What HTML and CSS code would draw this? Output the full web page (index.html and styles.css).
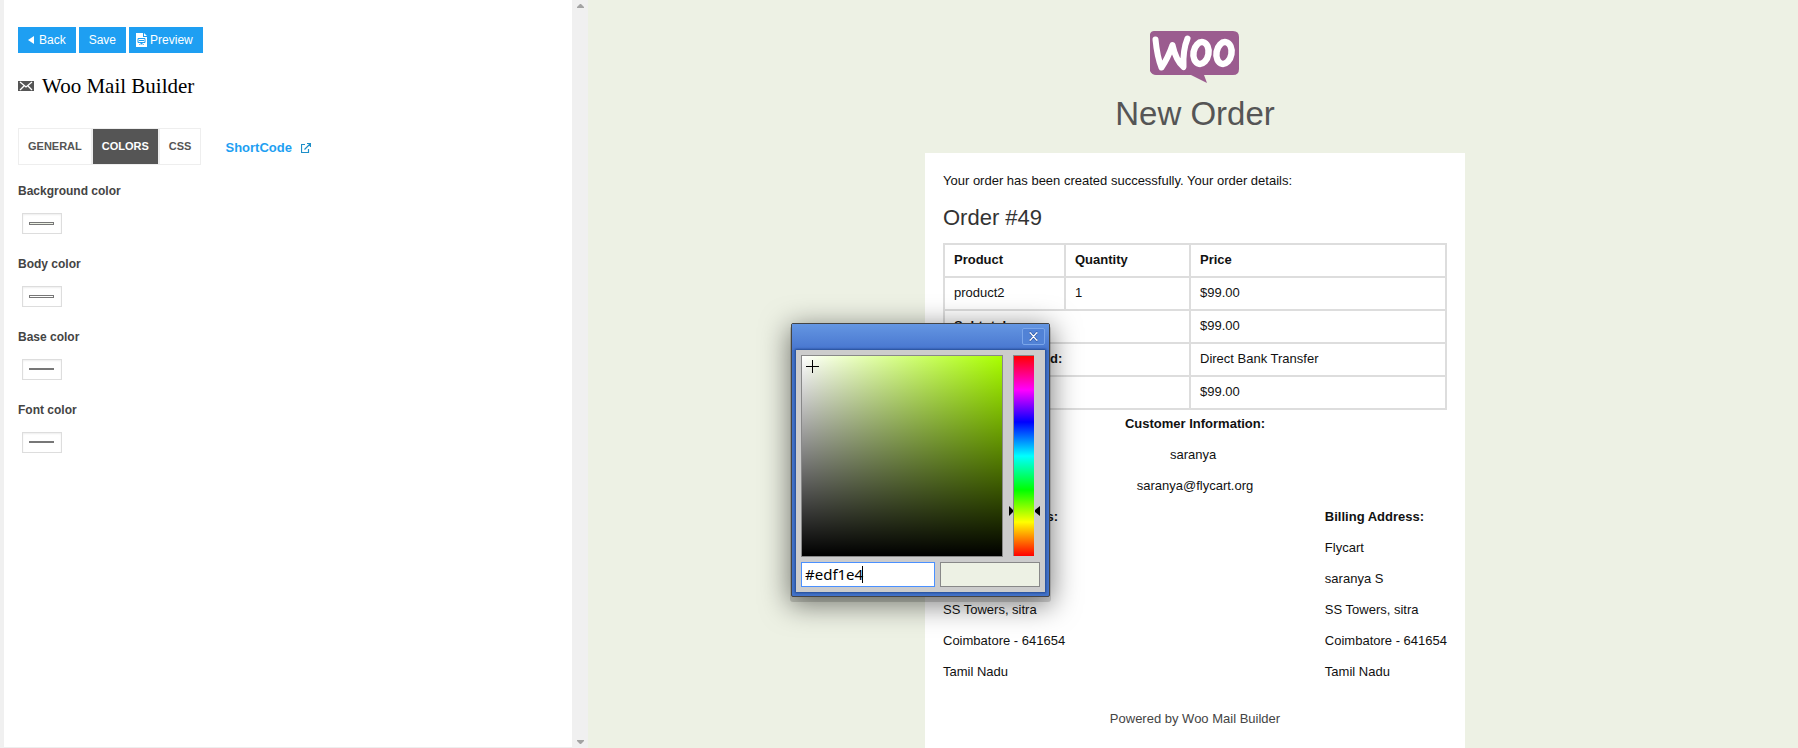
FILE: index.html
```html
<!DOCTYPE html>
<html lang="en">
<head>
<meta charset="utf-8">
<title>Woo Mail Builder</title>
<link rel="stylesheet" href="styles.css">
</head>
<body>
<div class="app">
  <aside class="panel">
    <div class="panel-body">
      <div class="toolbar">
        <button type="button" class="btn btn-back"><svg class="icon-back" viewBox="0 0 6 8"><path d="M6 0v8L0 4z"/></svg>Back</button>
        <button type="button" class="btn btn-save">Save</button>
        <button type="button" class="btn btn-preview"><svg class="icon-file" viewBox="0 0 11 14"><path fill="#fff" d="M0 0h7v4h4v10H0z"/><path fill="#fff" d="M8 0l3 3H8z"/><path fill="none" stroke="#1e9ff2" d="M2 5.500h7v4H2zM3 7.500h5M5.500 9.500v2M3.500 12l1-1.500M7.500 12l-1-1.500"/></svg>Preview</button>
      </div>
      <h1 class="title"><svg class="icon-mail" viewBox="0 0 16 10"><rect width="16" height="10" fill="#555"/><path d="M2 1l6 5 6-5M2 9l4-4M14 9l-4-4" fill="none" stroke="#fff" stroke-width="1.300"/></svg>Woo Mail Builder</h1>
      <nav class="nav">
        <div class="tabs">
          <button type="button" class="tab">GENERAL</button>
          <button type="button" class="tab tab-active">COLORS</button>
          <button type="button" class="tab">CSS</button>
        </div>
        <a href="#" class="shortcode">ShortCode<svg class="icon-ext" viewBox="0 0 10 10"><path d="M4 1.500H.5v8h7V6M3.500 6.500L9 1M6 .5h3.500V4" fill="none" stroke="#1e8fc8" stroke-width="1.200"/></svg></a>
      </nav>
      <form class="fields">
        <div class="field"><label for="c1">Background color</label><input class="swatch" id="c1" type="color" value="#edf1e4"></div>
        <div class="field"><label for="c2">Body color</label><input class="swatch" id="c2" type="color" value="#ffffff"></div>
        <div class="field"><label for="c3">Base color</label><input class="swatch swatch-thin" id="c3" type="color" value="#555555"></div>
        <div class="field"><label for="c4">Font color</label><input class="swatch swatch-thin" id="c4" type="color" value="#111111"></div>
      </form>
    </div>
    <div class="scrollbar">
      <svg class="arrow" viewBox="0 0 7 4"><path d="M0 4V3L3 0h1l3 3v1z"/></svg>
      <svg class="arrow" viewBox="0 0 7 4"><path d="M0 0v1l3 3h1l3-3V0z"/></svg>
    </div>
  </aside>

  <main class="preview">
    <svg class="logo" viewBox="0 0 89 52" role="img" aria-label="Woo">
      <path fill="#9b5c8f" d="M4 0h79q6 0 6 6v32q0 6-6 6H54l3 8-16-8H6q-4 0-6-4V3q1-3 4-3z"/>
      <g fill="none" stroke="#fff" stroke-linecap="round" stroke-linejoin="round">
        <path stroke-width="6" d="M5.500 8.500C6.500 19 8 28 11.500 36.500 16 30 19 24 22.500 14c2 9 5 17 11 22C33 25 34 16 37.500 7.500"/>
        <ellipse cx="51" cy="22" rx="7.500" ry="11" stroke-width="6.500" transform="rotate(10 51 22)"/>
        <ellipse cx="74" cy="22" rx="7.500" ry="11" stroke-width="6.500" transform="rotate(10 74 22)"/>
      </g>
    </svg>
    <h2 class="mail-title">New Order</h2>
    <article class="card">
      <p class="line">Your order has been created successfully. Your order details:</p>
      <h3 class="order">Order #49</h3>
      <table class="items">
        <thead><tr><th class="col-product">Product</th><th class="col-qty">Quantity</th><th>Price</th></tr></thead>
        <tbody>
          <tr><td>product2</td><td>1</td><td>$99.00</td></tr>
          <tr><th colspan="2">Subtotal:</th><td>$99.00</td></tr>
          <tr><th colspan="2">Payment Method:</th><td>Direct Bank Transfer</td></tr>
          <tr><th colspan="2">Total:</th><td>$99.00</td></tr>
        </tbody>
      </table>
      <section class="customer">
        <p class="line strong">Customer Information:</p>
        <p class="line">saranya&nbsp;</p>
        <p class="line">saranya@flycart.org</p>
      </section>
      <div class="addresses">
        <address>
          <p class="line strong">Shipping Address:</p>
          <p class="line">Flycart</p>
          <p class="line">saranya S</p>
          <p class="line">SS Towers, sitra</p>
          <p class="line">Coimbatore - 641654</p>
          <p class="line">Tamil Nadu</p>
        </address>
        <address>
          <p class="line strong">Billing Address:</p>
          <p class="line">Flycart</p>
          <p class="line">saranya S</p>
          <p class="line">SS Towers, sitra</p>
          <p class="line">Coimbatore - 641654</p>
          <p class="line">Tamil Nadu</p>
        </address>
      </div>
      <p class="powered">Powered by Woo Mail Builder</p>
    </article>
  </main>

  <div class="picker" role="dialog" aria-label="Color picker">
    <div class="picker-bar">
      <button type="button" class="close" aria-label="Close"><svg viewBox="0 0 10 10"><path d="M1.500 1l7 8M8.500 1l-7 8M.5 1h2M7.500 1h2M.5 9h2M7.500 9h2" fill="none" stroke="#2c55a5" stroke-width="3"/><path d="M1.500 1l7 8M8.500 1l-7 8M.5 1h2M7.500 1h2M.5 9h2M7.500 9h2" fill="none" stroke="#fff" stroke-width="1.600"/></svg></button>
    </div>
    <div class="picker-body">
      <div class="shade"><svg class="cross" viewBox="0 0 13 13"><path d="M6.500 0v13M0 6.500h13" stroke="#000"/></svg></div>
      <div class="hue"><svg class="marks" viewBox="0 0 31 10"><path d="M0 0v10L4 6V4zM31 0v10l-5-4V4z"/></svg></div>
      <div class="values">
        <div class="hex-wrap"><input class="hex" type="text" value="#edf1e4" aria-label="Hex color"><span class="caret"></span></div>
        <div class="result"></div>
      </div>
    </div>
  </div>
</div>
</body>
</html>
```
FILE: styles.css
```css
* { box-sizing: border-box; }

body {
  margin: 0;
  background: #edf1e4;
  color: #111;
  font-family: "Liberation Sans", Arial, sans-serif;
  font-size: 13px;
}

p, h1, h2, h3 { margin: 0; font-weight: normal; }
svg { display: block; }

.app {
  position: relative;
  display: flex;
  height: 100vh;
  overflow: hidden;
}

.panel {
  display: flex;
  flex: 0 0 588px;
  padding-left: 4px;
  background: #f0f0f0;
}

.panel-body {
  flex: 1;
  padding: 27px 14px 0;
  background: #fff;
  border-bottom: 1px solid #eee;
}

.scrollbar {
  display: flex;
  flex-direction: column;
  justify-content: space-between;
  align-items: center;
  width: 16px;
  padding: 4px 0;
}
.arrow { width: 7px; height: 4px; fill: #a3a3a3; }

.toolbar { display: flex; gap: 3px; }
.btn {
  display: flex;
  align-items: center;
  height: 26px;
  padding: 0 10px;
  border: 0;
  background: #1e9ff2;
  color: #fff;
  font: 12px "Liberation Sans", Arial, sans-serif;
}
.btn-preview { padding: 0 10px 0 7px; }
.icon-back { width: 6px; height: 8px; margin-right: 5px; fill: #fff; }
.icon-file { width: 11px; height: 14px; margin-right: 3px; }

.title {
  display: flex;
  align-items: center;
  gap: 8px;
  height: 24px;
  margin-top: 21px;
  color: #000;
  font: 21px/24px "Liberation Serif", "Times New Roman", serif;
}
.icon-mail { width: 16px; height: 10px; }

.nav { display: flex; gap: 24px; align-items: center; margin-top: 30px; }
.tabs { display: flex; gap: 2px; border: 1px solid #eee; }
.tab {
  height: 35px;
  padding: 0 9px 2px;
  border: 0;
  background: #fff;
  color: #555;
  font: bold 11px "Liberation Sans", Arial, sans-serif;
}
.tabs { background: #eee; }
.tab-active { background: #555; color: #fff; }
.shortcode {
  display: flex;
  align-items: center;
  gap: 9px;
  padding-top: 2px;
  color: #1e9ff2;
  font-weight: bold;
  text-decoration: none;
}
.icon-ext { width: 10px; height: 10px; }

.fields { margin-top: 18px; }
.field { display: flex; flex-direction: column; align-items: flex-start; height: 73px; }
.field label {
  color: #444;
  font-size: 12px;
  font-weight: bold;
  line-height: 16px;
}
.swatch {
  appearance: none;
  width: 40px;
  height: 21px;
  margin: 14px 4px 0;
  padding: 8px 7px 8px 6px;
  border: 1px solid #ddd;
  background: #fff;
  box-shadow: inset 0 1px 2px rgba(0, 0, 0, 0.07);
}
.swatch-thin { padding: 8px 7px 9px 6px; }
.swatch::-webkit-color-swatch-wrapper { padding: 0; }
.swatch::-webkit-color-swatch { border: 1px solid #777; border-radius: 0; }

.preview {
  display: flex;
  flex: 1;
  flex-direction: column;
  align-items: center;
  padding: 31px 0 0 4px;
}
.logo { flex: none; width: 89px; height: 52px; margin-right: 2px; }
.mail-title {
  margin-top: 12px;
  color: #555;
  font-size: 33px;
  line-height: 38px;
}
.card {
  flex: 1 0 auto;
  width: 540px;
  margin-top: 20px;
  padding: 18px;
  background: #fff;
}
.line { height: 31px; line-height: 20px; }
.strong { font-weight: bold; }
.order { height: 41px; color: #333; font-size: 22px; line-height: 32px; }

.items {
  width: 100%;
  border-collapse: collapse;
  table-layout: fixed;
}
.items th, .items td {
  height: 33px;
  padding: 0 9px 2px;
  border: 2px solid #ddd;
  text-align: left;
}
.col-product { width: 121px; }
.col-qty { width: 125px; }

.customer { padding-top: 4px; text-align: center; }
.addresses { display: flex; justify-content: space-between; }
address { font-style: normal; }
.powered { margin-top: 16px; color: #444; line-height: 20px; text-align: center; }

.picker {
  position: absolute;
  top: 323px;
  left: 791px;
  width: 259px;
  padding: 0 4px 4px;
  border: 1px solid #444;
  border-radius: 2px;
  background: #4272c8;
  box-shadow: 0 4px 0 1px rgba(0, 0, 0, 0.15), 0 6px 28px 2px rgba(0, 0, 0, 0.5);
}
.picker-bar {
  display: flex;
  justify-content: flex-end;
  height: 26px;
  margin: 0 -4px;
  padding: 4px 4px 0;
  background: linear-gradient(#6496e2, #4876cf);
}
.close {
  display: flex;
  align-items: center;
  justify-content: center;
  width: 23px;
  height: 17px;
  padding: 0;
  border: 1px solid #7ba6ea;
  border-radius: 2px;
  background: #5182d6;
}
.close svg { width: 9px; height: 9px; overflow: visible; }
.picker-body {
  display: grid;
  grid-template-columns: 202px 21px;
  column-gap: 10px;
  row-gap: 5px;
  padding: 5px;
  background: #ccc;
  box-shadow: 0 0 2px 1px #234a91;
}
.shade {
  height: 202px;
  padding: 4px;
  border: 1px solid #888;
  background: linear-gradient(to top, #000, transparent), linear-gradient(to right, #fff, #af0);
}
.cross { width: 13px; height: 13px; }
.hue {
  position: relative;
  height: 201px;
  border: solid #888;
  border-width: 1px 0 0 1px;
  background: linear-gradient(#f00, #f0f 17%, #00f 33%, #0ff 50%, #0f0 67%, #ff0 83%, #f00);
}
.marks { position: absolute; top: 150px; left: -5px; width: 31px; height: 10px; }
.values { display: flex; gap: 5px; grid-column: 1 / -1; width: 239px; }
.hex-wrap { position: relative; width: 134px; }
.hex {
  width: 100%;
  height: 25px;
  padding: 0 3px 1px;
  border: 1px solid #4a90ff;
  outline: 0;
  background: #fff;
  color: #000;
  font: 15px "Noto Sans", "Open Sans", sans-serif;
}
.caret { position: absolute; top: 4px; left: 61px; width: 1px; height: 17px; background: #000; }
.result { flex: 1; height: 25px; border: 1px solid #888; background: #edf1e4; }
```
